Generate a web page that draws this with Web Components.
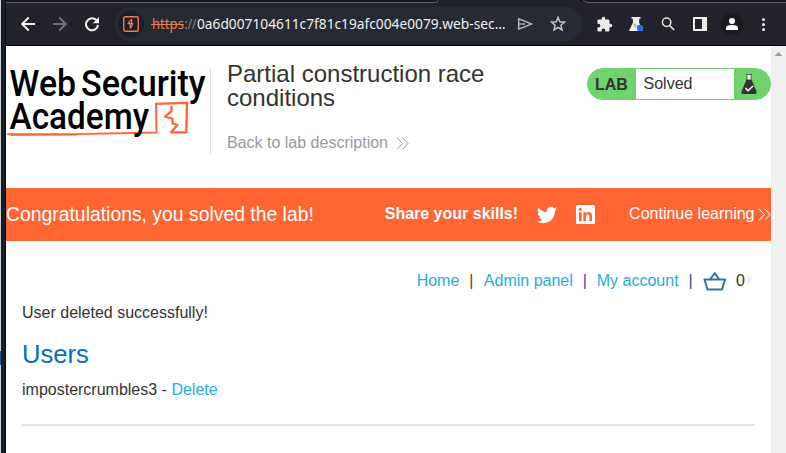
<!DOCTYPE html>
<html lang="en">
<head>
<meta charset="utf-8">
<title>Partial construction race conditions</title>
<style>
html,body{margin:0;width:786px;height:453px;overflow:hidden;background:#fff;font:16px/20px "Liberation Sans",Arial,sans-serif;color:#333332}
</style>
</head>
<body>
<lab-window></lab-window>
<script>
function define(name, html){
  const t=document.createElement('template');
  t.innerHTML='<style>*{box-sizing:border-box}svg{display:block;flex:none}</style>'+html;
  customElements.define(name,class extends HTMLElement{
    constructor(){super();this.attachShadow({mode:'open'}).append(t.content.cloneNode(true));}
  });
}

define('tool-icon',`<style>:host{display:flex;width:20px;height:20px;flex:none;align-items:center;justify-content:center}</style><slot></slot>`);

define('address-bar',`<style>
:host{display:flex;align-items:center;width:468px;height:34px;border-radius:17px;background:#282a33;flex:none}
.site{width:26px;height:26px;margin-left:4px;border-radius:50%;background:#1f2027;display:flex;align-items:center;justify-content:center;flex:none}
.url{display:block;margin-left:7px;overflow:visible}
tool-icon{margin-left:13px}.send{margin-left:7px}
</style>
<span class="site"><svg width="16" height="16" viewBox="0 0 16 16" fill="none" stroke="#e67d57"><rect x=".7" y=".7" width="14.6" height="14.6" rx="1.8" stroke-width="1.4"/><path d="M8.600 3.200 5 7.600H9.800L7.300 12.500M8.600 3.200V7.500M7.300 8V12.500" stroke-width="1.300" stroke-linejoin="round"/></svg></span>
<svg class="url" width="357" height="30" font-family="Noto Sans, Open Sans, sans-serif" font-size="15">
<text y="19.6"><tspan x="1" fill="#e67d57" textLength="32" lengthAdjust="spacingAndGlyphs">https</tspan><tspan x="33.500" fill="#8a8b90" textLength="12" lengthAdjust="spacingAndGlyphs">://</tspan><tspan x="46" fill="#eff0f0" textLength="308.500" lengthAdjust="spacingAndGlyphs">0a6d007104611c7f81c19afc004e0079.web-sec…</tspan></text>
<path d="M0 15.5H33" stroke="#e67d57" stroke-width="1.200"/></svg>
<tool-icon class="send"><svg width="18" height="16" viewBox="0 0 18 16" fill="none" stroke="#b2b2b2" stroke-width="1.5"><path d="M2.700 2.800 15.500 8 2.700 13.200zM2.700 8H9"/></svg></tool-icon>
<tool-icon><svg width="18" height="18" viewBox="0 0 18 18" fill="none" stroke="#c4c4c3" stroke-width="1.5"><path d="m9 2.400 1.800 4.400 4.700.4-3.600 3.100 1.100 4.700L9 12.500 5 15l1.100-4.700-3.600-3.100 4.700-.4z"/></svg></tool-icon>`);

define('browser-toolbar',`<style>
:host{display:block;height:46px;background:#21222a;border-bottom:1px solid #050507}
.tabs{display:block;height:3px}
.row{display:flex;align-items:center;height:42px}
.nav{display:flex;gap:12px;margin:0 12px 0 12px}
.tools{display:flex;gap:12px;margin-left:12px}
.avatar{border-radius:50%;box-shadow:0 0 0 1px #1a1b1e;background:#1a1b1e}
</style>
<svg class="tabs" width="780" height="3"><path d="M0 0H435Q434 2.500 428 2.500H0zM574 0H780V2.500H584Q577 2.500 574 0" fill="#15151a"/><path d="M0 2.500H427Q432 2.500 433 0M577 0Q579 2.500 584 2.500H780" fill="none" stroke="#626167"/></svg>
<div class="row"><div class="nav">
<tool-icon><svg width="16" height="16" viewBox="0 0 16 16" fill="none" stroke="#f1f1ef" stroke-width="2"><path d="M15 8H2m6.700-6.500L2.200 8l6.500 6.500"/></svg></tool-icon>
<tool-icon><svg width="16" height="16" viewBox="0 0 16 16" fill="none" stroke="#737376" stroke-width="2"><path d="M1 8h13M7.300 1.500 13.800 8l-6.500 6.500"/></svg></tool-icon>
<tool-icon><svg width="16" height="16" viewBox="0 0 16 16"><path d="M12.500 4.300A6 6 0 1 0 14 8.900" fill="none" stroke="#f1f1ef" stroke-width="2"/><path d="M15 1v6.200H8.800z" fill="#f1f1ef"/></svg></tool-icon>
</div><address-bar></address-bar><div class="tools">
<tool-icon><svg width="17" height="17" viewBox="0 0 24 24" fill="#eeeeec"><path d="M20.500 11H19V7a2 2 0 0 0-2-2h-4V3.500a2.500 2.500 0 0 0-5 0V5H4a2 2 0 0 0-2 2v3.800h1.500a2.700 2.700 0 0 1 0 5.400H2V20a2 2 0 0 0 2 2h3.800v-1.500a2.700 2.700 0 0 1 5.400 0V22H17a2 2 0 0 0 2-2v-4h1.500a2.500 2.500 0 0 0 0-5z"/></svg></tool-icon>
<tool-icon><svg width="16" height="16" viewBox="0 0 16 16"><path d="M3.500 1h9v1.700h-1.300v4l3.500 8.300H.9l4-8.300v-4H3.500z" fill="#eeeeec"/><path d="m7 7 2 3-2 2-2-3z" fill="#b9bbbd"/><circle cx="12" cy="12" r="3.200" fill="#1b72e8"/></svg></tool-icon>
<tool-icon><svg width="16" height="16" viewBox="0 0 16 16" fill="none" stroke="#dededc"><circle cx="6.600" cy="6.300" r="4.200" stroke-width="1.500"/><path d="m9.500 9.300 4.700 4.700" stroke-width="1.700"/></svg></tool-icon>
<tool-icon><svg width="14" height="14"><path d="M0 0H14V14H0zM2 2V12H9V2z" fill="#eeeeec" fill-rule="evenodd"/></svg></tool-icon>
<tool-icon class="avatar"><svg width="14" height="14" fill="#fff"><circle cx="7" cy="4" r="3"/><path d="M1 13v-1.800Q1 8 7 8t6 3.200V13z"/></svg></tool-icon>
<tool-icon><svg width="6" height="16" fill="#eeeeec"><circle cx="2.500" cy="3.500" r="1.500"/><circle cx="2.500" cy="8.500" r="1.500"/><circle cx="2.500" cy="13.500" r="1.500"/></svg></tool-icon>
</div></div>`);

define('academy-logo',`<style>:host{display:block;width:205px;height:86px;border-right:1px solid #e0e0e0;flex:none}svg{overflow:visible}</style>
<svg width="204" height="86" font-family="Roboto, sans-serif" font-size="37" font-weight="500" fill="#000">
<g fill="none" stroke="#ff6633" stroke-linecap="round" stroke-linejoin="round"><path d="M2 66.300 70 66.100 150.500 64.500 150 36" stroke-width="1.900"/><path d="M5 67.300 70 67" stroke-width="1"/><path d="M150 35.800 181 34.800 180.300 64.300H165L171.500 57 166.500 55.500V50.500L159 48.700 165.500 43V39" stroke-width="2.300"/></g>
<text><tspan x="3.600" y="28" textLength="66.500" lengthAdjust="spacingAndGlyphs">Web</tspan> <tspan x="75" y="28" textLength="124.500" lengthAdjust="spacingAndGlyphs">Security</tspan> <tspan x="3.600" y="60.600" textLength="139.400" lengthAdjust="spacingAndGlyphs">Academy</tspan></text></svg>`);

define('double-chevron',`<style>:host{display:block;width:13px;height:13px}svg{fill:none;stroke:currentColor;stroke-width:1}</style><svg width="13" height="13"><path d="m1 .7 5.500 5.800L1 12.300M6.500.7 12 6.500l-5.500 5.800"/></svg>`);

define('lab-status',`<style>
:host{display:flex;width:184px;height:32px;border:1px solid #70d36e;border-radius:16px;background:#70d36e;overflow:hidden;line-height:30px;flex:none}
b{width:48px;padding-left:7px;padding-top:1px}.state{width:98px;background:#fff;padding-left:7.500px}
svg{margin:5px 0 0 7px}
</style><b>LAB</b><span class="state">Solved</span><svg width="16" height="20"><path d="M5 .5h6M6 1v5M10 1v5" stroke="#555" fill="none"/><path d="M6.500 1h3v5h-3z" fill="#fff"/><path d="M5.500 5.500h5l5 12Q16 20 14.500 20h-13Q0 20 .5 17.500z" fill="#333332"/><path d="m4.500 14 2.500 2.700 5-4.700" stroke="#fff" stroke-width="1.500" fill="none"/></svg>`);

define('lab-header',`<style>
:host{display:flex;height:142px;padding-top:22px}
.title{width:344px;margin-left:16px}
h1{font-size:24px;line-height:24px;font-weight:400;margin:-6px 0 0;width:280px}
.back{display:flex;align-items:center;gap:8px;color:#999;margin-top:23px}
lab-status{margin-left:16px}
</style><academy-logo></academy-logo><div class="title"><h1>Partial construction race conditions</h1><div class="back">Back to lab description <double-chevron></double-chevron></div></div><lab-status></lab-status>`);

define('solved-banner',`<style>
:host{display:flex;align-items:center;height:53px;background:#ff6633;color:#fff;overflow:hidden}
.msg{font-size:19.360px;width:379px;white-space:nowrap;padding-bottom:1px}b{width:152px;padding-bottom:1px}
.in{margin-left:19px}.more{display:flex;align-items:center;gap:3.500px;margin-left:34.500px;white-space:nowrap;padding-bottom:1px}
</style><span class="msg">Congratulations, you solved the lab!</span><b>Share your skills!</b>
<svg width="20" height="20" viewBox="0 0 24 24" fill="#fff"><path d="M23.950 4.570a10 10 0 0 1-2.820.770 4.960 4.960 0 0 0 2.160-2.720c-.950.550-2.010.950-3.130 1.180a4.920 4.920 0 0 0-8.380 4.480C7.690 8.090 4.070 6.130 1.640 3.160a4.920 4.920 0 0 0 1.520 6.570 4.900 4.900 0 0 1-2.230-.610v.060a4.920 4.920 0 0 0 3.950 4.830 5 5 0 0 1-2.210.080 4.940 4.940 0 0 0 4.600 3.420A9.870 9.870 0 0 1 0 19.540a13.990 13.990 0 0 0 7.550 2.210c9.050 0 14-7.500 14-13.980l-.020-.640a9.900 9.900 0 0 0 2.420-2.560z"/></svg>
<svg class="in" width="19" height="19" fill="#fff"><rect width="19" height="19" rx="1.500"/><g fill="#ff6633"><circle cx="4.300" cy="4.300" r="1.600"/><path d="M3 7.200h2.700V16H3zM7.300 7.200h2.600v1.200Q10.700 7 12.600 7q3.400 0 3.400 3.900V16h-2.700v-4.600q0-2.100-1.500-2.100-1.800 0-1.800 2.200V16H7.300z"/></g></svg>
<span class="more">Continue learning <double-chevron></double-chevron></span>`);

define('account-nav',`<style>
:host{display:flex;justify-content:flex-end;height:20px;padding-right:10px;white-space:nowrap}
a{color:#29abe2}i{font-style:normal;width:4px;margin:0 10px}i.brown{color:#6b3a22;margin-right:10.500px}i.blue{color:#1d4f91}
svg{margin:1px 10.500px 0 0}
</style><a>Home</a><i class="brown">|</i><a>Admin panel</a><i class="blue">|</i><a>My account</a><i class="blue">|</i><svg width="23" height="20" fill="none" stroke="#2e72b8" stroke-width="2" stroke-linejoin="round"><path d="M1.500 7.500H22L19 17.500H4.500zM7.500 7 11.700 1.200 16 7"/></svg><span>0</span>`);

define('admin-users',`<style>
:host{display:block;padding:30px 16px 0}
p{margin:0}.done{margin-top:12px}
h2{font-size:25.600px;line-height:30px;font-weight:400;color:#0071bc;margin:16px 0 11px}
a{color:#29abe2}hr{height:2px;border:0;background:#e3e3e3;margin:24px 0 0}
</style><account-nav></account-nav><p class="done">User deleted successfully!</p><h2>Users</h2><p>impostercrumbles3 - <a>Delete</a></p><hr>`);

define('scroll-track',`<style>:host{display:block;width:15px;background:#f0f0f0;flex:none}</style><svg width="15" height="15"><path d="M3.500 10 7.500 6l4 4z" fill="#a0a0a0"/></svg>`);

define('lab-window',`<style>
:host{display:grid;grid-template-columns:6px 780px;width:786px;height:453px}
.edge{background:linear-gradient(90deg,#cfd1d2 1px,#111923 1px,#1b222c 5px,#04080f 5px)}
.edge svg{margin-top:350px}
.view{display:flex;height:407px}main{width:765px;background:#fff}
</style><div class="edge"><svg width="1" height="18"><path d="M0 1H1V15H0z" fill="#195d9b"/></svg></div><div><browser-toolbar></browser-toolbar><div class="view"><main><lab-header></lab-header><solved-banner></solved-banner><admin-users></admin-users></main><scroll-track></scroll-track></div></div>`);
</script>
</body>
</html>
